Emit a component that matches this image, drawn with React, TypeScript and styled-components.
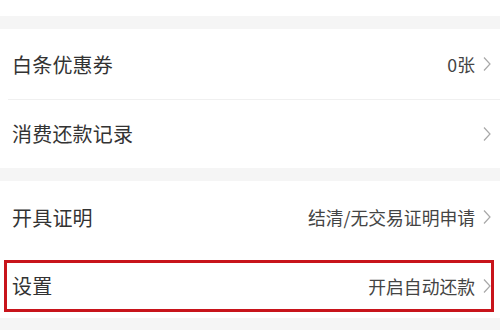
import styled, { createGlobalStyle } from "styled-components";

const GlobalStyle = createGlobalStyle`
  html, body {
    margin: 0;
    padding: 0;
    background: #f5f5f5;
    font-family: "Noto Sans CJK SC", "Noto Sans", sans-serif;
  }
`;

type Item = {
  title: string;
  value?: string;
  height: number;
  highlight?: boolean;
};

const groups: Item[][] = [
  [
    { title: "白条优惠券", value: "0张", height: 70 },
    { title: "消费还款记录", height: 69 },
  ],
  [
    { title: "开具证明", value: "结清/无交易证明申请", height: 72 },
    { title: "设置", value: "开启自动还款", height: 65, highlight: true },
  ],
];

function Chevron() {
  return (
    <svg width="8" height="16" viewBox="0 0 8 16" fill="none">
      <path d="M1 1.5 L7 8 L1 14.5" stroke="#a8a8a8" strokeWidth="1.2" />
    </svg>
  );
}

export default function App() {
  return (
    <>
      <GlobalStyle />
      <Page>
        <TopStrip />
        {groups.map((items, gi) => (
          <Section key={gi}>
            {items.map((item, i) => (
              <Row key={item.title} $height={item.height} $divider={gi === 0 && i === 0}>
                <RowInner $highlight={item.highlight}>
                  <Title>{item.title}</Title>
                  <Right>
                    {item.value && <Value>{item.value}</Value>}
                    <Chevron />
                  </Right>
                </RowInner>
              </Row>
            ))}
          </Section>
        ))}
      </Page>
    </>
  );
}

const Page = styled.div`
  width: 500px;
  height: 330px;
  overflow: hidden;
  display: flex;
  flex-direction: column;
  gap: 13px;
  background: #f5f5f5;
`;

const TopStrip = styled.div`
  height: 16px;
  background: #fff;
`;

const Section = styled.section`
  background: #fff;
  display: flex;
  flex-direction: column;
`;

const Row = styled.div<{ $height: number; $divider?: boolean }>`
  height: ${(p) => p.$height}px;
  padding: 0 6px 0 4px;
  display: flex;
  align-items: center;
  position: relative;

  ${(p) =>
    p.$divider &&
    `
    &::after {
      content: "";
      position: absolute;
      left: 8px;
      right: 0;
      bottom: -1px;
      height: 1px;
      background: #f0f0f0;
    }
  `}
`;

const RowInner = styled.div<{ $highlight?: boolean }>`
  flex: 1;
  height: 52px;
  box-sizing: border-box;
  display: flex;
  align-items: center;
  justify-content: space-between;
  padding: 0 0 0 5px;
  border: 3px solid ${(p) => (p.$highlight ? "#c8141b" : "transparent")};
`;

const Title = styled.span`
  font-size: 20px;
  color: #333;
  letter-spacing: 0.2px;
`;

const Right = styled.div`
  display: flex;
  align-items: center;
  gap: 8px;
`;

const Value = styled.span`
  font-size: 17.8px;
  color: #444;
`;
